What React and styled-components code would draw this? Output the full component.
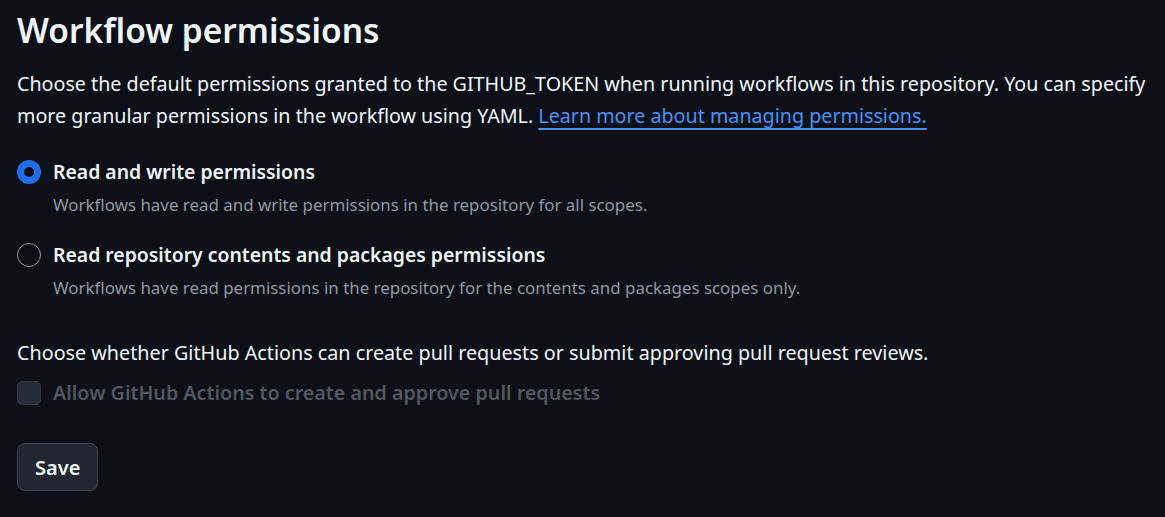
import React, { useState } from 'react'
import styled, { createGlobalStyle } from 'styled-components'

const GlobalStyle = createGlobalStyle`
  html, body {
    margin: 0;
    padding: 0;
    background: #0d1117;
  }
  body {
    font-family: "Noto Sans", "Open Sans", sans-serif;
    color: #f0f6fc;
  }
`

const Page = styled.div`
  padding: 6px 12px 24px 17px;
  min-height: 517px;
  box-sizing: border-box;
`

const Title = styled.h2`
  margin: 0 0 14px 0;
  font-size: 33.5px;
  font-weight: 600;
  line-height: 48px;
`

const Intro = styled.p`
  margin: 0 0 24px 0;
  font-size: 19.7px;
  line-height: 32px;
`

const Link = styled.a`
  color: #4493f8;
  text-decoration: underline;
  text-underline-offset: 5px;
  text-decoration-thickness: 2px;
`

const Option = styled.label`
  display: grid;
  grid-template-columns: 24px 1fr;
  column-gap: 12px;
  margin-bottom: 18px;
  cursor: pointer;
`

const Radio = styled.span`
  width: 24px;
  height: 24px;
  box-sizing: border-box;
  border-radius: 50%;
  margin-top: 4px;
  border: ${({ $checked }) => ($checked ? '7px solid #1f6feb' : '1.5px solid #9198a1')};
  background: ${({ $checked }) => ($checked ? '#0d1117' : 'transparent')};
`

const OptionText = styled.div`
  display: flex;
  flex-direction: column;
`

const OptionTitle = styled.span`
  font-size: 19.4px;
  font-weight: 600;
  line-height: 32px;
`

const OptionNote = styled.span`
  margin-top: 1px;
  font-size: 16.9px;
  line-height: 32px;
  color: #9198a1;
`

const Prompt = styled.p`
  margin: 33px 0 8px 0;
  font-size: 19.75px;
  line-height: 32px;
`

const CheckRow = styled.label`
  display: flex;
  align-items: center;
  gap: 12px;
  color: #50575f;
  font-size: 19.7px;
  font-weight: 600;
  line-height: 32px;
`

const Checkbox = styled.span`
  width: 24px;
  height: 24px;
  box-sizing: border-box;
  border-radius: 5px;
  background: #262c36;
  border: 1px solid #2f3640;
`

const SaveButton = styled.button`
  margin-top: 34px;
  height: 48px;
  padding: 0 17px;
  border-radius: 8px;
  background: #212830;
  border: 1.5px solid #3d444d;
  color: #f0f6fc;
  font-family: inherit;
  font-size: 20px;
  font-weight: 600;
  cursor: pointer;
`

const options = [
  {
    id: 'write',
    title: 'Read and write permissions',
    note: 'Workflows have read and write permissions in the repository for all scopes.',
  },
  {
    id: 'read',
    title: 'Read repository contents and packages permissions',
    note: 'Workflows have read permissions in the repository for the contents and packages scopes only.',
  },
]

const App = () => {
  const [selected, setSelected] = useState('write')

  return (
    <>
      <GlobalStyle />
      <Page>
        <Title>Workflow permissions</Title>
        <Intro>
          Choose the default permissions granted to the GITHUB_TOKEN when running workflows in this
          repository. You can specify more granular permissions in the workflow using YAML.{' '}
          <Link href="#">Learn more about managing permissions.</Link>
        </Intro>
        {options.map((opt) => (
          <Option key={opt.id} onClick={() => setSelected(opt.id)}>
            <Radio $checked={selected === opt.id} />
            <OptionText>
              <OptionTitle>{opt.title}</OptionTitle>
              <OptionNote>{opt.note}</OptionNote>
            </OptionText>
          </Option>
        ))}
        <Prompt>
          Choose whether GitHub Actions can create pull requests or submit approving pull request reviews.
        </Prompt>
        <CheckRow>
          <Checkbox />
          Allow GitHub Actions to create and approve pull requests
        </CheckRow>
        <SaveButton>Save</SaveButton>
      </Page>
    </>
  )
}

export default App
